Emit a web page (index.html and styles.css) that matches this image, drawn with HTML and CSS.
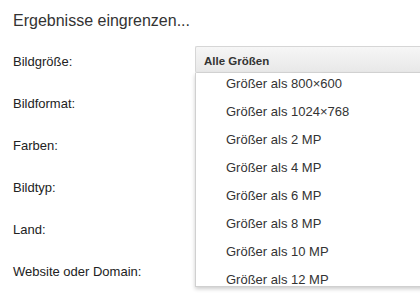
FILE: index.html
```html
<!DOCTYPE html>
<html lang="de">
<head>
    <meta charset="UTF-8">
    <meta name="viewport" content="width=device-width, initial-scale=1.0">
    <title>Ergebnisse eingrenzen</title>
    <link rel="stylesheet" href="styles.css">
</head>
<body>
    <div class="panel">
        <h2 class="title">Ergebnisse eingrenzen...</h2>

        <div class="filters">
            <div class="label">Bildgröße:</div>
            <div class="select">
                <div class="select-head">Alle Größen</div>
                <div class="menu">
                    <ul class="menu-list">
                        <li>Größer als 800×600</li>
                        <li>Größer als 1024×768</li>
                        <li>Größer als 2 MP</li>
                        <li>Größer als 4 MP</li>
                        <li>Größer als 6 MP</li>
                        <li>Größer als 8 MP</li>
                        <li>Größer als 10 MP</li>
                        <li>Größer als 12 MP</li>
                    </ul>
                </div>
            </div>

            <div class="label">Bildformat:</div>
            <div></div>

            <div class="label">Farben:</div>
            <div></div>

            <div class="label">Bildtyp:</div>
            <div></div>

            <div class="label">Land:</div>
            <div></div>

            <div class="label">Website oder Domain:</div>
            <div></div>
        </div>
    </div>
</body>
</html>
```

FILE: styles.css
```css
* {
    margin: 0;
    padding: 0;
    box-sizing: border-box;
}

body {
    font-family: "Liberation Sans", Arial, sans-serif;
    color: #222;
    background: #fff;
    overflow: hidden;
}

.panel {
    padding: 11px 0 0 13px;
}

.title {
    font-size: 16px;
    font-weight: normal;
    line-height: 20px;
    color: #333;
    margin-bottom: 15px;
}

.filters {
    display: grid;
    grid-template-columns: 182px 230px;
    grid-auto-rows: 42px;
}

.label {
    font-size: 13px;
    line-height: 27px;
    padding-top: 2px;
    color: #222;
}

.select {
    position: relative;
}

.select-head {
    height: 27px;
    padding: 4px 8px 0;
    line-height: 21px;
    font-size: 11.5px;
    font-weight: bold;
    color: #333;
    background: linear-gradient(#f6f6f6, #e8e8e8);
    border: 1px solid #d6d6d6;
    border-right: none;
    border-radius: 2px 0 0 2px;
}

.menu {
    position: absolute;
    top: 27px;
    left: 0;
    width: 100%;
    height: 214px;
    overflow: hidden;
    background: #fff;
    border: 1px solid #d0d0d0;
    border-top: none;
    border-right: none;
    box-shadow: 0 2px 4px rgba(0, 0, 0, 0.2);
    z-index: 10;
}

.menu-list {
    list-style: none;
    margin-top: -3px;
}

.menu-list li {
    padding-left: 30px;
    font-size: 13px;
    line-height: 28px;
    color: #333;
}
```
